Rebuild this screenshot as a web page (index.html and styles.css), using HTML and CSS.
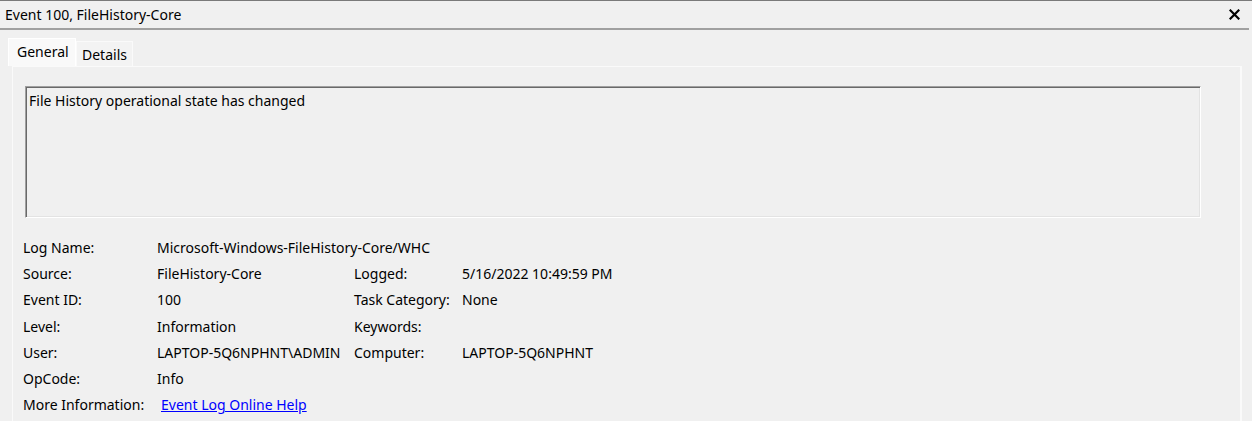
FILE: index.html
```html
<!DOCTYPE html>
<html>
<head>
<meta charset="utf-8">
<link rel="stylesheet" href="styles.css">
</head>
<body>
<div class="window">
  <div class="titlebar">
    <span class="title">Event 100, FileHistory-Core</span>
    <span class="close"><svg width="11" height="11" viewBox="0 0 11 11"><path d="M1.5 1.5 L9.5 9.5 M9.5 1.5 L1.5 9.5" stroke="#000" stroke-width="2.2" stroke-linecap="square"/></svg></span>
  </div>
  <div class="tabs">
    <div class="tab active">General</div>
    <div class="tab">Details</div>
  </div>
  <div class="panel">
    <div class="message">File History operational state has changed</div>
    <div class="props">
      <div class="lbl">Log Name:</div><div class="val span3">Microsoft-Windows-FileHistory-Core/WHC</div>
      <div class="lbl">Source:</div><div class="val">FileHistory-Core</div><div class="lbl">Logged:</div><div class="val">5/16/2022 10:49:59 PM</div>
      <div class="lbl">Event ID:</div><div class="val">100</div><div class="lbl">Task Category:</div><div class="val">None</div>
      <div class="lbl">Level:</div><div class="val">Information</div><div class="lbl">Keywords:</div><div class="val"></div>
      <div class="lbl">User:</div><div class="val">LAPTOP-5Q6NPHNT\ADMIN</div><div class="lbl">Computer:</div><div class="val">LAPTOP-5Q6NPHNT</div>
      <div class="lbl">OpCode:</div><div class="val span3">Info</div>
      <div class="lbl">More Information:</div><div class="val span3"><a class="link" href="#">Event Log Online Help</a></div>
    </div>
  </div>
</div>
</body>
</html>
```
FILE: styles.css
```css
* { box-sizing: border-box; }
html, body { margin: 0; padding: 0; }
body {
  background: #f0f0f0;
  font-family: "Noto Sans", "Open Sans", sans-serif;
  font-size: 14px;
  color: #000;
  width: 1252px;
  height: 421px;
  overflow: hidden;
}
.window {
  border-top: 1px solid #7a7a7a;
}
.titlebar {
  height: 29px;
  display: flex;
  align-items: center;
  justify-content: space-between;
  padding: 0 9px 1px 5px;
  margin-right: 3px;
  border-bottom: 2px solid #a0a0a0;
}
.title { font-size: 14px; }
.close { display: flex; align-items: center; }
.tabs {
  display: flex;
  align-items: flex-end;
  padding-left: 8px;
  margin-top: 8px;
  height: 28px;
}
.tab {
  height: 25px;
  padding: 0 5px;
  display: flex;
  align-items: center;
  background: #f3f3f3;
  border: 1px solid #fafafa;
  border-bottom: none;
}
.tab.active {
  height: 28px;
  padding: 0 8px 2px 8px;
  background: #f9f9f9;
  border-color: #ffffff;
  width: 68px;
}
.panel {
  margin: 0 10px 0 12px;
  height: 360px;
  border: 1px solid #fafafa;
  border-right: 2px solid #fafafa;
  padding: 19px 0 0 12px;
}
.message {
  width: 1176px;
  height: 132px;
  border-top: 1px solid #a0a0a0;
  border-left: 1px solid #a0a0a0;
  border-right: 1px solid #ffffff;
  border-bottom: 1px solid #ffffff;
  box-shadow: inset 1px 1px 0 #696969, inset -1px -1px 0 #e3e3e3;
  padding: 5px 3px;
  line-height: 18px;
}
.props {
  display: grid;
  grid-template-columns: 134px 197px 108px 300px;
  grid-auto-rows: 26.2px;
  margin-top: 17px;
  margin-left: -2px;
  align-items: center;
}
.lbl, .val { white-space: nowrap; line-height: 18px; }
.span3 { grid-column: span 3; }
.link { color: #0000ff; text-decoration: underline; margin-left: 4px; }
```
